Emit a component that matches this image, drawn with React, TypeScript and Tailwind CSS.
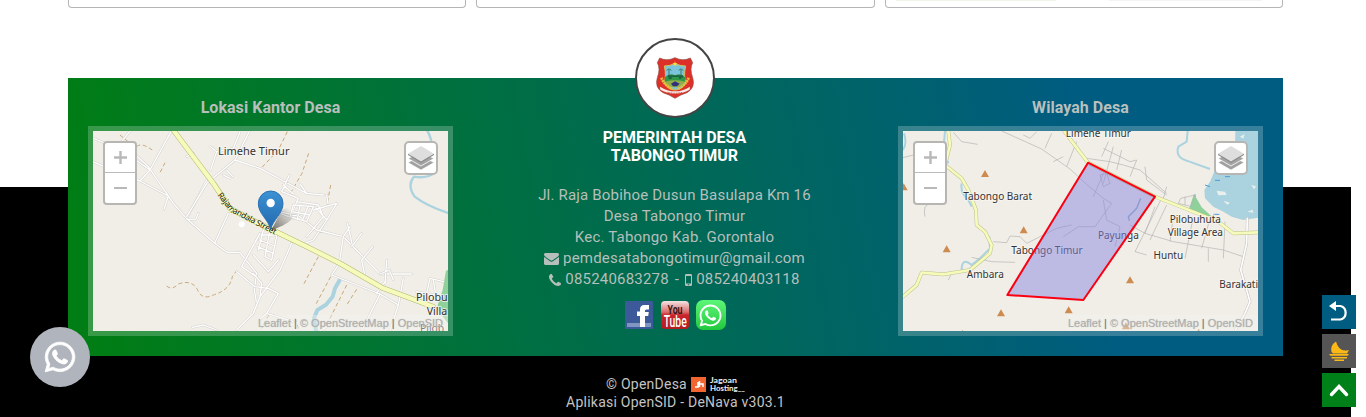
import type { ReactNode } from "react";
import { FaWhatsapp } from "react-icons/fa";

const LABEL = "'Noto Sans', sans-serif";

function Lines({ d, casing = "#d3d0cd", fill = "#ffffff", w = 6 }: { d: string; casing?: string; fill?: string; w?: number }) {
  return (
    <g fill="none" strokeLinejoin="round" strokeLinecap="round">
      <path d={d} stroke={casing} strokeWidth={w + 3} />
      <path d={d} stroke={fill} strokeWidth={w} />
    </g>
  );
}

function Label({ x, y, size = 33, anchor = "middle", children }: { x: number; y: number; size?: number; anchor?: "start" | "middle"; children: string }) {
  return (
    <text x={x} y={y} fontSize={size} fontFamily={LABEL} textAnchor={anchor} fill="#333333" stroke="#f8f6f2" strokeWidth="6" strokeOpacity=".75" paintOrder="stroke">
      {children}
    </text>
  );
}

function OfficeMap() {
  return (
    <svg className="block h-[200px] w-[355px]" viewBox="99 183 1065 600">
      <rect x="99" y="183" width="1065" height="600" fill="#f1eee8" />
      <path d="M1158 602 L1164 600 V760 L1130 715 L1148 660Z" fill="#8fd19a" />
      <g fill="none" stroke="#aad3df" strokeWidth="7" strokeLinecap="round">
        <path d="M1102 183 Q1122 212 1122 310 Q1100 326 1062 320 Q1040 345 1064 380 Q1100 408 1164 429" />
        <path d="M838 632 L825 655 L818 680 L798 704 L772 720 L762 745 L768 783" strokeWidth="12" />
      </g>
      <g fill="none" stroke="#bf9a62" strokeWidth="2.5" strokeDasharray="12 8">
        <path d="M320 648 Q335 662 355 642 Q395 628 412 658 Q425 692 460 675 Q510 660 517 620 L530 602" />
        <path d="M682 185 L655 240 L605 293 M746 250 L726 310 L690 372 M812 345 L800 410 M230 230 Q245 215 282 244 M315 278 L300 308 M180 195 L230 236" />
        <path d="M775 560 L730 645 M812 620 L765 708 M860 645 L810 745 M890 658 L862 702 M626 735 L605 775 M705 745 L718 783" />
      </g>
      <Lines d="M99 204 L140 222 M99 275 L200 320 L240 333 L325 378 M210 183 L185 215 L265 290 L340 400 L382 448 L464 520 L500 546 L540 548 L590 610 L583 660 L590 700 M333 185 L270 300 L240 333 M185 240 L270 300 M325 378 L312 418 M380 446 L440 330 M382 448 L408 447 L415 430 M464 520 L505 430" w={4} />
      <Lines d="M540 185 L520 235 L470 245 L452 300 M568 185 L525 270 L440 340 L380 440 M470 245 L452 230 M525 270 L600 295 L665 330 L740 370 L790 375 M665 365 L688 315 M665 365 L715 385 L690 440 M760 420 L830 400 M830 400 L800 450 L760 510 L735 520 M800 450 L770 415 M690 445 L710 395 L775 405 L790 440 L740 500 M640 420 L720 440 L770 480 L850 500 L960 612 L1055 612 M500 300 L518 320 M490 315 L510 325 M380 260 L400 250 M740 370 L720 342 M700 372 L670 345 M800 375 L804 400 M660 430 L700 445" w={4} />
      <Lines d="M600 490 L545 590 L585 618 M530 605 L585 650 L625 655 L655 670 L620 730 L700 755 M695 520 L660 600 L630 640 L600 680 L580 730 L530 780 M600 680 L605 640 L580 610 M580 555 L625 605 L655 570 M620 730 L600 748 M397 772 L430 765 L470 780" w={4} />
      <Lines d="M870 470 L850 500 L838 580 L815 615 L960 672 L1015 705 M960 672 L905 783 M1030 625 L1015 705 L990 783 M975 640 L980 570 M915 620 L905 570 L938 530 M875 530 L905 490 M960 612 L990 600 M1000 630 L990 605 M862 460 L876 520 M1100 670 L1110 625 L1150 635 M1070 665 L1150 680 M1120 630 L1128 680 M950 670 L975 635 M780 783 L800 770" w={4} />
      <Lines d="M603 495 H650 M598 510 L645 528 M593 530 L640 550 M610 480 L595 540 M628 490 L615 560 M650 500 L635 570 M615 560 L635 570" w={4} />
      <Lines d="M700 405 L690 440 L740 455 L760 410Z M720 405 L712 448 M745 408 L728 450 M695 425 L750 435" w={4} />
      <circle cx="545" cy="463" r="9" fill="#fff" />
      <Lines d="M342 183 L460 340 L510 415 L600 462 L740 530 L840 580 L970 655 L1120 710" casing="#afb96f" fill="#f6fabb" w={13} />
      <path id="street" d="M472 376 L510 424 L590 466 L664 504" fill="none" />
      <text fontSize="25" fontFamily={LABEL} fill="#111" stroke="#f6fabb" strokeWidth="3" paintOrder="stroke">
        <textPath href="#street" textLength="212">Rajamandala Street</textPath>
      </text>
      <Label x={581} y={254}>Limehe Timur</Label>
      <Label x={1068} y={693} size={32} anchor="start">Pilobu</Label>
      <Label x={1100} y={735} size={32} anchor="start">Villa</Label>
      <Label x={1080} y={785} size={31} anchor="start">Pilob</Label>
      <defs>
        <linearGradient id="pin" x1="0" x2="0" y1="0" y2="1">
          <stop offset="0" stopColor="#3a92d4" />
          <stop offset="1" stopColor="#2468ad" />
        </linearGradient>
        <linearGradient id="shade" x1="0" x2="1" y1="1" y2="0">
          <stop offset="0" stopColor="#000" stopOpacity=".55" />
          <stop offset=".9" stopColor="#000" stopOpacity="0" />
        </linearGradient>
      </defs>
      <path d="M633 482 L664 422 Q686 404 700 426 Q704 450 670 466Z" fill="url(#shade)" />
      <path d="M632 478 C625 448 595 432 595 400 A37 37 0 0 1 669 400 C669 432 639 448 632 478Z" fill="url(#pin)" stroke="#2b6fae" strokeWidth="3" />
      <circle cx="632" cy="399" r="12.5" fill="#fff" />
    </svg>
  );
}

const PEAKS: [number, number][] = [[285, 311], [401, 480], [170, 537], [333, 729], [536, 720], [720, 630], [708, 768], [41, 351], [926, 787], [218, 791]];

function RegionMap() {
  return (
    <svg className="block h-[200px] w-[355px]" viewBox="39 183 1065 600">
      <rect x="39" y="183" width="1065" height="600" fill="#f1eee8" />
      <path d="M1036 183 H1104 V443 L1060 450 L1025 440 L1000 425 L970 410 L945 385 L943 360 L960 335 L975 300 L1010 285 L1035 240Z" fill="#aad3df" />
      <path d="M1050 200 L1064 192 L1060 206Z M980 362 L1005 365 L1010 375 L985 376Z M1000 392 L1020 398 L1012 404Z M1084 345 L1098 349 L1092 358Z M1072 425 L1088 419 L1090 428Z" fill="#e9efec" />
      <path d="M975 331 H990 M1005 320 H1020 M945 345 L960 350 M915 373 V388 M970 433 H988" stroke="#4a9bd8" strokeWidth="3" />
      <path d="M912 372 L895 422 L930 434 L968 442 L935 412Z" fill="#8fd19a" />
      <g fill="none" stroke="#aad3df" strokeWidth="6">
        <path d="M893 183 L890 215 L865 230 Q855 262 890 272 L960 297" />
        <path d="M39 240 Q52 220 42 190 M165 183 L160 240 L175 280 M215 340 Q210 370 235 390 L245 410 M298 500 L300 535 L270 565 L245 585 Q215 560 215 600" />
      </g>
      <g fill="none" stroke="#b4b2b0" strokeWidth="2">
        <path d="M335 183 L455 237 L540 297 L592 345 M400 195 L420 205 L440 185 M485 190 L465 235 M560 215 L530 290 M490 275 L520 260 M655 215 L635 260 M590 265 L660 275 L700 285 L750 300 L830 370 M640 235 L720 275 L740 270 L720 320 M670 230 L640 340 M695 240 L680 300 M765 290 L770 330 L830 375 M830 350 L820 385 M105 440 Q98 405 118 402" />
        <path d="M190 187 L215 215 L263 223 M310 515 L350 518 L360 498 L390 500 L410 520 L500 475 L545 465 M245 562 L305 575 L375 577 M175 630 L185 610 M39 263 L70 255 M815 385 L735 545 L770 555 M795 410 L765 490 L720 465 M830 405 L780 510 M765 490 L850 515 L1000 540 L1060 560 M910 440 L885 565 M960 445 L935 535 M1005 455 L1000 565 M850 440 L840 515 M955 535 V575 M735 475 L700 510 M872 385 L915 375 L905 410 L865 400Z M885 380 V405" />
        <path d="M592 345 L640 385 L665 400 L615 470 L565 470 L520 500 M640 310 L610 380 M630 315 L650 310 L660 340 L640 350Z M640 390 L650 450 L690 470 L675 530" />
      </g>
      <Lines d="M1072 445 L1070 520 L1052 600 L1070 660 L1080 695 L1065 730 L1035 783" casing="#c4c1be" w={5} />
      <Lines d="M175 183 L180 225 L165 285 L215 325 L235 360 L258 420 L260 465 L285 485 L305 525 L300 550 L240 600 L160 613 L95 608 L80 645 L39 680" casing="#bdc28b" fill="#f6fabb" w={8} />
      <Lines d="M522 183 L594 278 L795 380 L910 425 L985 455 L1030 490 L1104 487" casing="#bdc28b" fill="#f6fabb" w={8} />
      {PEAKS.map(([x, y]) => (
        <path key={`${x}-${y}`} d={`M${x} ${y - 11} l12 21 h-24Z`} fill="#cd8b50" />
      ))}
      <Label x={625} y={201} size={30}>Limehe Timur</Label>
      <Label x={323} y={391} size={30}>Tabongo Barat</Label>
      <Label x={471} y={552} size={30}>Tabongo Timur</Label>
      <Label x={685} y={506} size={30}>Payunga</Label>
      <Label x={916} y={459} size={30}>Pilobuhuta</Label>
      <Label x={916} y={498} size={30}>Village Area</Label>
      <Label x={835} y={566} size={30}>Huntu</Label>
      <Label x={286} y={625} size={30}>Ambara</Label>
      <Label x={1046} y={653} size={30}>Barakati</Label>
      <path d="M594 278 L795 380 L580 690 L352 675Z" fill="#8a85dd" fillOpacity=".5" stroke="#fb0012" strokeWidth="6" strokeLinejoin="round" />
      <path d="M752 385 L740 415 L715 440 L718 452" stroke="#8a9bd0" strokeWidth="4" fill="none" />
    </svg>
  );
}

function Layers() {
  return (
    <svg className="h-[26px] w-[26px]" viewBox="0 0 26 26">
      <path d="M0 17.5 13 11 26 17.5 13 25Z" fill="#a0a0a0" stroke="#fff" strokeWidth=".6" />
      <path d="M0 13.5 13 7 26 13.5 13 21Z" fill="#a4a4a4" stroke="#fff" strokeWidth=".8" />
      <path d="M0 8.8 13 1 26 8.8 13 17Z" fill="#dedede" />
      <path d="M0 8.8 13 16.4 26 8.8V10L13 18 0 10Z" fill="#8c8c8c" />
    </svg>
  );
}

function MapCard({ title, children }: { title: string; children: ReactNode }) {
  return (
    <section className="w-[365px]">
      <h2 className="h-12 pt-[18px] text-center text-[16px] leading-[24px] font-bold tracking-[0.05px] text-[#b9bfbc]">{title}</h2>
      <div className="relative h-[210px] border-5 border-white/22 bg-clip-padding">
        {children}
        <div className="absolute top-[10px] left-[10px] flex h-[64px] w-[34px] flex-col rounded border-2 border-[#b8b6b3] bg-white text-[#b9b9b9]">
          <button className="flex h-[30px] items-center justify-center border-b border-[#bbb]">
            <svg className="h-[13px] w-[13px]" viewBox="0 0 13 13"><path d="M0 6.5H13M6.5 0V13" stroke="currentColor" strokeWidth="2.4" /></svg>
          </button>
          <button className="flex h-[30px] items-center justify-center">
            <svg className="h-[13px] w-[13px]" viewBox="0 0 13 13"><path d="M0 6H13" stroke="currentColor" strokeWidth="2" /></svg>
          </button>
        </div>
        <button className="absolute top-[10px] right-[10px] flex h-[34px] w-[34px] items-center justify-center rounded-[5px] border-2 border-[#b8b6b3] bg-white">
          <Layers />
        </button>
        <div className="absolute right-0 bottom-0 h-[16px] bg-[#f4f2ee]/40 pr-[5px] font-['Liberation_Sans',sans-serif] text-[11px] leading-[16px] whitespace-nowrap text-[#777] [text-shadow:0_0_1px_#bbb]">
          <span className="text-[#b0b0ae]">Leaflet</span> | <span className="text-[#b0b0ae]">© OpenStreetMap</span> | <span className="text-[#b0b0ae]">OpenSID</span>
        </div>
      </div>
    </section>
  );
}

function Crest() {
  return (
    <svg className="h-[42px] w-[40px]" viewBox="0 0 120 126">
      <path d="M14 3 Q36 14 60 2 Q84 14 106 3 L113 17 Q103 35 113 62 Q122 92 96 107 Q76 113 60 124 Q44 113 24 107 Q-2 92 7 62 Q17 35 7 17Z" fill="#dd3029" stroke="#8d5148" strokeWidth="2" />
      <path d="M28 27 Q46 27 60 19 Q74 27 92 27 Q85 58 93 78 Q80 99 60 99 Q40 99 27 78 Q35 58 28 27Z" fill="#7bc4d9" stroke="#d9bd52" strokeWidth="3" />
      <path d="M30 60 Q46 46 60 56 Q75 46 90 60 L91 74 Q60 88 29 74Z" fill="#2e9848" />
      <path d="M42 56 V37 M78 56 V37 M35 40 Q42 31 49 40 M71 40 Q78 31 85 40" fill="none" stroke="#3b7f70" strokeWidth="3" />
      <path d="M38 55 H84 V62 H78 V66 H72 V60 H50 V66 H42Z" fill="#1d6442" />
      <path d="M30 74 Q60 66 90 74 L84 86 Q60 96 36 86Z" fill="#8fae4a" />
      <path d="M48 80 L60 73 74 80 66 88H54Z" fill="#31307d" />
      <path d="M19 62 Q28 86 53 96 M101 62 Q92 86 67 96" fill="none" stroke="#e9bd3b" strokeWidth="8" strokeDasharray="6 2" />
      <path d="M15 89 Q60 117 105 89 L104 98 Q60 122 16 98Z" fill="#f8e9e2" />
      <path d="M38 106 Q60 112 82 106" fill="none" stroke="#b83c37" strokeWidth="3" strokeDasharray="3 2" />
      <path d="M60 13 l2 6h6l-5 3 2 6-5-4-5 4 2-6-5-3h6z" fill="#f5e13c" />
    </svg>
  );
}

function Envelope() {
  return (
    <svg className="h-[12px] w-[15px]" viewBox="0 256 1792 1408" preserveAspectRatio="none" fill="currentColor">
      <path d="M1792 710v794q0 66-47 113t-113 47h-1472q-66 0-113-47t-47-113v-794q44 49 101 87 362 246 497 345 57 42 92.5 65.5t94.5 48 110 24.5h2q51 0 110-24.5t94.5-48 92.5-65.5q170-123 498-345 57-39 100-87zm0-294q0 79-49 151t-122 123q-376 261-468 325-10 7-42.5 31t-54 38.5-52 32.5-57.5 27-50 9h-2q-23 0-50-9t-57.5-27-52-32.5-54-38.5-42.5-31q-91-64-262-182.5t-205-142.5q-62-42-117-115.5t-55-136.5q0-78 41.5-130t118.5-52h1472q65 0 112.5 47t47.5 113z" />
    </svg>
  );
}

function Phone() {
  return (
    <svg className="h-[12px] w-[12px]" viewBox="0 128 1408 1408" fill="currentColor">
      <path d="M1408 1240q0 27-10 70.5t-21 68.5q-21 50-122 106-94 51-186 51-27 0-52.5-3.5t-57.5-12.5-47.5-14.5-55.5-20.5-49-18q-98-35-175-83-128-79-264.5-215.5t-215.5-264.5q-48-77-83-175-3-9-18-49t-20.5-55.5-14.5-47.5-12.5-57.5-3.5-52.5q0-92 51-186 56-101 106-122 25-11 68.5-21t70.5-10q14 0 21 3 18 6 53 76 11 19 30 54t35 63.5 31 53.5q3 4 17.5 25t21.5 35.5 7 28.5q0 20-28.5 50t-62 55-62 53-28.5 46q0 9 5 22.5t8.5 20.5 14 24 11.5 19q76 137 174 235t235 174q2 1 19 11.5t24 14 20.5 8.5 22.5 5q18 0 46-28.5t53-62 55-62 50-28.5q14 0 28.5 7t35.5 21.5 25 17.5q25 15 53.5 31t63.5 35 54 30q70 35 76 53 3 7 3 21z" />
    </svg>
  );
}

function Mobile() {
  return (
    <svg className="h-[12px] w-[7px]" viewBox="0 0 7 12">
      <path fillRule="evenodd" fill="currentColor" d="M1.2 0H5.8Q7 0 7 1.2V10.8Q7 12 5.8 12H1.2Q0 12 0 10.8V1.2Q0 0 1.2 0ZM1 2V9.5H6V2ZM2.8 10.2V11.2H4.2V10.2Z" />
    </svg>
  );
}

function Socials() {
  return (
    <div className="mt-[10px] flex justify-center gap-[6px]">
      <svg className="h-[30px] w-[30px]" viewBox="0 0 30 30">
        <rect x="1" y="1" width="28" height="28" rx="1" fill="#3c5a9a" />
        <rect x="3" y="23" width="24" height="4" fill="#7f95c2" />
        <path d="M16 27V16h-3v-4.500h3V9.500Q16 5 20.500 5H25v4.500h-2.600Q21 9.500 21 11V12h3.800l-.6 4H21v11Z" fill="#fff" />
      </svg>
      <svg className="h-[30px] w-[30px]" viewBox="0 0 30 30">
        <defs>
          <linearGradient id="yt" x1="0" x2="0" y1="0" y2="1">
            <stop offset="0" stopColor="#f5e3e3" /><stop offset=".4" stopColor="#dc6a6a" /><stop offset=".5" stopColor="#c9262b" /><stop offset="1" stopColor="#b31d22" />
          </linearGradient>
        </defs>
        <rect x="1" y="1" width="28" height="28" rx="4" fill="url(#yt)" />
        <text x="15" y="13.500" textAnchor="middle" textLength="15" lengthAdjust="spacingAndGlyphs" fontSize="13" fontWeight="700" fontFamily="Roboto, sans-serif" fill="#33191a">You</text>
        <text x="15.200" y="26.500" textAnchor="middle" textLength="23" lengthAdjust="spacingAndGlyphs" fontSize="16" fontWeight="500" fontFamily="Roboto, sans-serif" fill="#fff">Tube</text>
      </svg>
      <div className="flex h-[30px] w-[30px] items-center justify-center rounded-[7px] bg-linear-to-b from-[#5cf777] to-[#1fc83c] text-white">
        <FaWhatsapp size={25} />
      </div>
    </div>
  );
}

export default function App() {
  return (
    <div className="relative h-[417px] w-[1366px] overflow-hidden bg-white font-['Roboto',sans-serif]">
      <div className="h-[417px] w-[1351px] bg-[linear-gradient(#fff_187px,#000_187px)]">
        <div className="flex h-[8px] gap-[10px] pl-[68px]">
          <div className="w-[398px] rounded-b-[4px] border border-t-0 border-[#b5b5b5] bg-white" />
          <div className="w-[399px] rounded-b-[4px] border border-t-0 border-[#b5b5b5] bg-white" />
          <div className="flex w-[398px] justify-between rounded-b-[4px] border border-t-0 border-[#b5b5b5] bg-white pr-[20px] pl-[10px]">
            <div className="h-px w-[160px] bg-[#f0f5ea]" />
            <div className="h-px w-[153px] bg-[#f4f4f4]" />
          </div>
        </div>
        <footer className="mt-[70px] ml-[68px] flex h-[278px] w-[1215px] justify-between bg-[linear-gradient(80deg,#007d14_2%,#005c80_83%)] px-[20px]">
          <MapCard title="Lokasi Kantor Desa"><OfficeMap /></MapCard>
          <section className="mr-[2px] flex w-[405px] flex-col items-center text-center">
            <div className="-mt-[40px] flex h-[80px] w-[80px] items-center justify-center rounded-full border-2 border-[#444] bg-white">
              <Crest />
            </div>
            <h1 className="mt-[11px] text-[16px] leading-[18px] font-bold tracking-[0px] text-white">PEMERINTAH DESA<br />TABONGO TIMUR</h1>
            <div className="mt-[20px] text-[15px] leading-[21px] tracking-[0.19px] whitespace-nowrap text-[#b6bfbb]">
              <p>Jl. Raja Bobihoe Dusun Basulapa Km 16</p>
              <p>Desa Tabongo Timur</p>
              <p>Kec. Tabongo Kab. Gorontalo</p>
              <p className="flex items-center justify-center gap-[4px]"><Envelope />pemdesatabongotimur@gmail.com</p>
              <p className="flex items-center justify-center gap-[4px]"><Phone /><span>085240683278</span><span className="px-[2px]">-</span><Mobile /><span>085240403118</span></p>
            </div>
            <Socials />
          </section>
          <MapCard title="Wilayah Desa"><RegionMap /></MapCard>
        </footer>
        <div className="mt-[19px] ml-[68px] w-[1215px] text-center text-[14px] leading-[18px] tracking-[0.24px] text-[#c3c3c3]">
          <p className="flex items-center justify-center gap-[4px]">
            © OpenDesa
            <svg className="h-[16px] w-[54px]" viewBox="0 0 54 16">
              <rect x="0" y="1" width="15" height="15" fill="#f26530" />
              <path d="M4 11h3V6M7 8v3M8.500 11V5M8.500 8h3.500v3" fill="none" stroke="#fff" strokeWidth="1.500" />
              <text x="19" y="7" fontSize="7.500" fontWeight="700" textLength="27" lengthAdjust="spacingAndGlyphs" letterSpacing="0" fontFamily="Lato, sans-serif" fill="#eee">Jagoan</text>
              <text x="19" y="14.500" fontSize="7.500" fontWeight="700" textLength="35" lengthAdjust="spacingAndGlyphs" letterSpacing="0" fontFamily="Lato, sans-serif" fill="#eee">Hosting__</text>
            </svg>
          </p>
          <p>Aplikasi OpenSID - DeNava v303.1</p>
        </div>
      </div>
      <button className="absolute top-[327px] left-[30px] flex h-[60px] w-[60px] items-center justify-center rounded-full bg-[#b0b4bc] text-white">
        <FaWhatsapp size={34} stroke="currentColor" strokeWidth={12} />
      </button>
      <div className="absolute top-[295px] right-[10px] flex flex-col gap-[5px]">
        <button className="h-[34px] w-[34px] bg-[#005c80]">
          <svg viewBox="0 0 34 34"><path d="M9 24.500H18.500A7 7 0 0 0 18.500 11H10" fill="none" stroke="#fff" strokeWidth="2.200" /><path d="M7 11L14 6V16Z" fill="#fff" /></svg>
        </button>
        <button className="h-[34px] w-[34px] bg-[#555]">
          <svg viewBox="0 0 34 34" fill="#fbb917"><path d="M14 7.500Q8 11 9.500 18L11 19.500H25L27 16Q17 19 14 7.500Z" /><path d="M7 20H27L25.500 21.800H8.500ZM9.500 23H25V24.400H9.500ZM12.500 25.600H22V27H12.500Z" /></svg>
        </button>
        <button className="h-[34px] w-[34px] bg-[#008018]">
          <svg viewBox="0 0 34 34"><path d="M9.500 21.500L17 13.500 24.500 21.500" fill="none" stroke="#fff" strokeWidth="3.400" strokeLinecap="round" /></svg>
        </button>
      </div>
    </div>
  );
}
